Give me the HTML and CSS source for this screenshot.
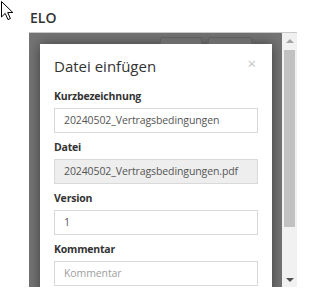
FILE: index.html
```html
<!DOCTYPE html>
<html lang="de">
<head>
  <meta charset="UTF-8">
  <title>ELO</title>
  <link rel="stylesheet" href="styles.css">
</head>
<body>

  <svg class="cursor" width="15" height="21" viewBox="0 0 15 21">
    <path d="M1.5 1.5 L1.5 17 L5.2 13.4 L8 19.6 L10.4 18.5 L7.7 12.5 L12.8 12.5 Z" fill="#fff" stroke="#000" stroke-width="1" stroke-linejoin="miter"/>
  </svg>

  <div class="app-title">ELO</div>

  <div class="frame">
    <div class="overlay">
      <div class="back-buttons">
        <span class="back-btn btn-a"></span>
        <span class="back-btn btn-b"></span>
      </div>

      <div class="dialog">
        <div class="dialog-head">
          <span class="dialog-title">Datei einfügen</span>
          <span class="dialog-close">&times;</span>
        </div>

        <div class="field">
          <label class="field-label">Kurzbezeichnung</label>
          <div class="field-input">20240502_Vertragsbedingungen</div>
        </div>

        <div class="field">
          <label class="field-label">Datei</label>
          <div class="field-input disabled">20240502_Vertragsbedingungen.pdf</div>
        </div>

        <div class="field">
          <label class="field-label">Version</label>
          <div class="field-input">1</div>
        </div>

        <div class="field">
          <label class="field-label">Kommentar</label>
          <div class="field-input placeholder">Kommentar</div>
        </div>
      </div>
    </div>

    <div class="scrollbar">
      <div class="scroll-btn"><span class="arrow-up"></span></div>
      <div class="scroll-track"><div class="scroll-thumb"></div></div>
      <div class="scroll-btn"><span class="arrow-down"></span></div>
    </div>
  </div>

</body>
</html>
```

FILE: styles.css
```css
body {
  margin: 0;
  font-family: 'Open Sans', 'Liberation Sans', sans-serif;
  background: #fff;
  color: #333;
}

.cursor {
  position: absolute;
  left: 0;
  top: 0;
}

.app-title {
  padding: 8px 0 0 30px;
  height: 20px;
  line-height: 20px;
  font-size: 14px;
  font-weight: 600;
  color: #333;
  margin-bottom: 4px;
}

.frame {
  margin-left: 29px;
  width: 268px;
  height: 254px;
  border-top: 1px solid #c9c9c9;
  display: flex;
  overflow: hidden;
}

.overlay {
  flex: 1;
  background: #747474;
  padding: 0 10px 0 11px;
  overflow: hidden;
}

.back-buttons {
  height: 11px;
  padding-top: 4px;
  box-sizing: border-box;
  display: flex;
  gap: 6px;
  padding-left: 120px;
  overflow: hidden;
}

.back-btn {
  display: block;
  height: 14px;
  border: 1px solid #5f5f5f;
  border-radius: 2px;
  background: #6d6d6d;
}

.btn-a { width: 40px; }
.btn-b { width: 42px; }

.dialog {
  background: #fff;
  padding: 0 14px 20px;
  box-shadow: 0 0 12px rgba(0, 0, 0, 0.45);
}

.dialog-head {
  display: flex;
  justify-content: space-between;
  align-items: flex-start;
  padding: 12px 0 6px;
}

.dialog-title {
  font-size: 15px;
  line-height: 20px;
  color: #333;
}

.dialog-close {
  font-size: 15px;
  line-height: 14px;
  color: #c4c4c4;
  margin-right: 2px;
}

.field {
  margin-top: 7px;
}

.field-label {
  display: block;
  font-size: 10.5px;
  line-height: 15px;
  font-weight: 700;
  color: #333;
  letter-spacing: -0.2px;
}

.field-input {
  margin-top: 4px;
  height: 25px;
  box-sizing: border-box;
  border: 1px solid #d9d9d9;
  padding-left: 9px;
  font-size: 10.5px;
  line-height: 23px;
  color: #555;
  letter-spacing: -0.1px;
}

.field-input.disabled {
  background: #eeeeee;
}

.field-input.placeholder {
  color: #a0a0a0;
}

.scrollbar {
  width: 15px;
  background: #f1f1f1;
  display: flex;
  flex-direction: column;
}

.scroll-btn {
  height: 15px;
  display: flex;
  align-items: center;
  justify-content: center;
}

.arrow-up {
  width: 0;
  height: 0;
  border-left: 4px solid transparent;
  border-right: 4px solid transparent;
  border-bottom: 4px solid #a3a3a3;
}

.arrow-down {
  width: 0;
  height: 0;
  border-left: 4px solid transparent;
  border-right: 4px solid transparent;
  border-top: 4px solid #505050;
}

.scroll-track {
  flex: 1;
  padding: 2px 2px 0;
}

.scroll-thumb {
  height: 177px;
  background: #c1c1c1;
}
```
